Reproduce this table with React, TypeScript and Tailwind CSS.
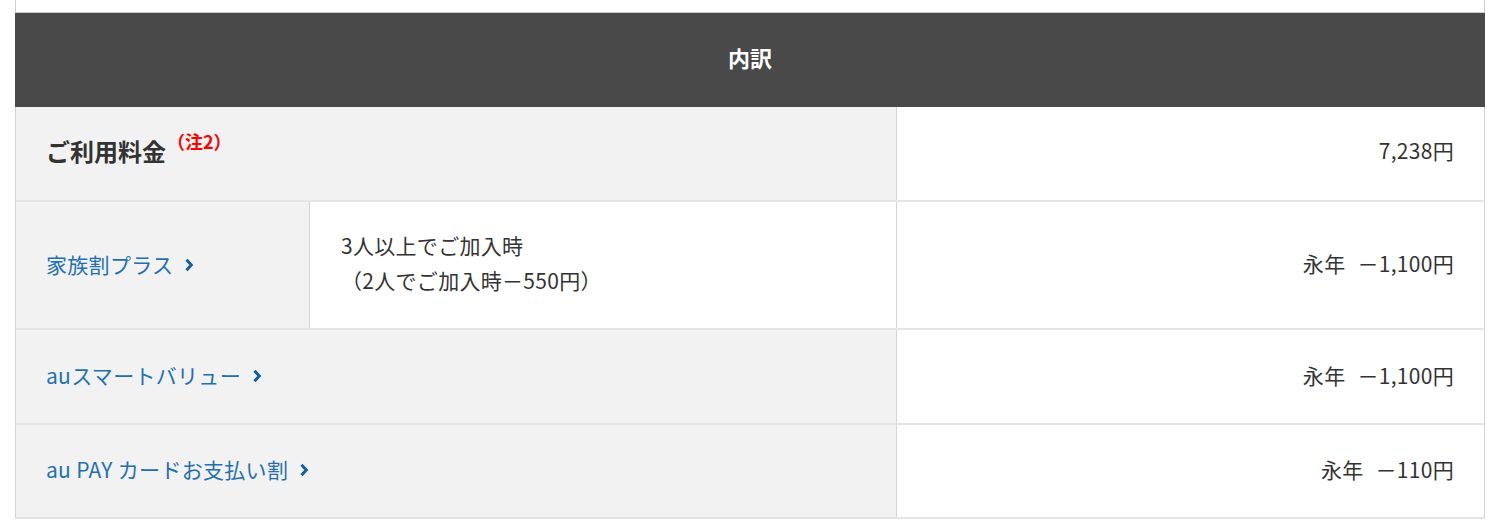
import React from "react";

const font = { fontFamily: '"Noto Sans CJK JP", "Noto Sans", sans-serif' };

function Chevron() {
  return (
    <svg width="10" height="14" viewBox="0 0 10 14" className="inline-block ml-[11px]">
      <path d="M2.5 1.8 L7.3 7 L2.5 12.2" fill="none" stroke="#12609f" strokeWidth="3" strokeLinejoin="miter" />
    </svg>
  );
}

function LinkText({ children }: { children: React.ReactNode }) {
  return (
    <span className="text-[#2270b3] text-[21px] tracking-[0.3px] inline-flex items-center">
      {children}
      <Chevron />
    </span>
  );
}

function Discount({ amount }: { amount: string }) {
  return (
    <span>
      永年<span className="inline-block w-[12px]"> </span>{amount}
    </span>
  );
}

export default function App() {
  return (
    <div className="bg-white w-[1499px] h-[528px] text-[#333]" style={font}>
      <div className="ml-[15px] w-[1470px]">
        <div className="h-[13px] border-l border-r border-b border-[#cfcfcf]" />
        <div className="h-[94px] bg-[#494949] flex items-center justify-center pb-[6px] text-white font-bold text-[22px]">
          内訳
        </div>
        <div className="flex h-[95px] border-l border-r border-[#d4d4d4] border-b-2 border-b-[#e4e4e4]">
          <div className="w-[881px] bg-[#f2f2f2] border-r border-[#d4d4d4] flex items-center pl-[30px] pb-[6px]">
            <span className="font-bold text-[24px] leading-none">ご利用料金</span>
            <span className="text-[#ff0000] font-bold text-[18px] relative top-[-9px] ml-[1px]">（注2）</span>
          </div>
          <div className="flex-1 bg-white flex items-center justify-end pr-[30px] pb-[5px] text-[21px] tracking-[0.3px]">7,238円</div>
        </div>
        <div className="flex h-[128px] border-l border-r border-[#d4d4d4] border-b-2 border-b-[#e4e4e4]">
          <div className="w-[294px] bg-[#f2f2f2] border-r border-[#d4d4d4] flex items-center pl-[30px]">
            <LinkText>家族割プラス</LinkText>
          </div>
          <div className="w-[587px] bg-white border-r border-[#d4d4d4] flex flex-col justify-center pl-[31px] pb-[4px] text-[21px] tracking-[0.3px] leading-[35px]">
            <div>3人以上でご加入時</div>
            <div>（2人でご加入時－550円）</div>
          </div>
          <div className="flex-1 bg-white flex items-center justify-end pr-[30px] pb-[2px] text-[21px] tracking-[0.3px]">
            <Discount amount="－1,100円" />
          </div>
        </div>
        <div className="flex h-[95px] border-l border-r border-[#d4d4d4] border-b-2 border-b-[#e4e4e4]">
          <div className="w-[881px] bg-[#f2f2f2] border-r border-[#d4d4d4] flex items-center pl-[30px] pb-[2px]">
            <LinkText>auスマートバリュー</LinkText>
          </div>
          <div className="flex-1 bg-white flex items-center justify-end pr-[30px] pb-[2px] text-[21px] tracking-[0.3px]">
            <Discount amount="－1,100円" />
          </div>
        </div>
        <div className="flex h-[94px] border-l border-r border-[#d4d4d4] border-b-2 border-b-[#e4e4e4]">
          <div className="w-[881px] bg-[#f2f2f2] border-r border-[#d4d4d4] flex items-center pl-[30px] pb-[2px]">
            <LinkText>au PAY カードお支払い割</LinkText>
          </div>
          <div className="flex-1 bg-white flex items-center justify-end pr-[30px] pb-[2px] text-[21px] tracking-[0.3px]">
            <Discount amount="－110円" />
          </div>
        </div>
      </div>
    </div>
  );
}
